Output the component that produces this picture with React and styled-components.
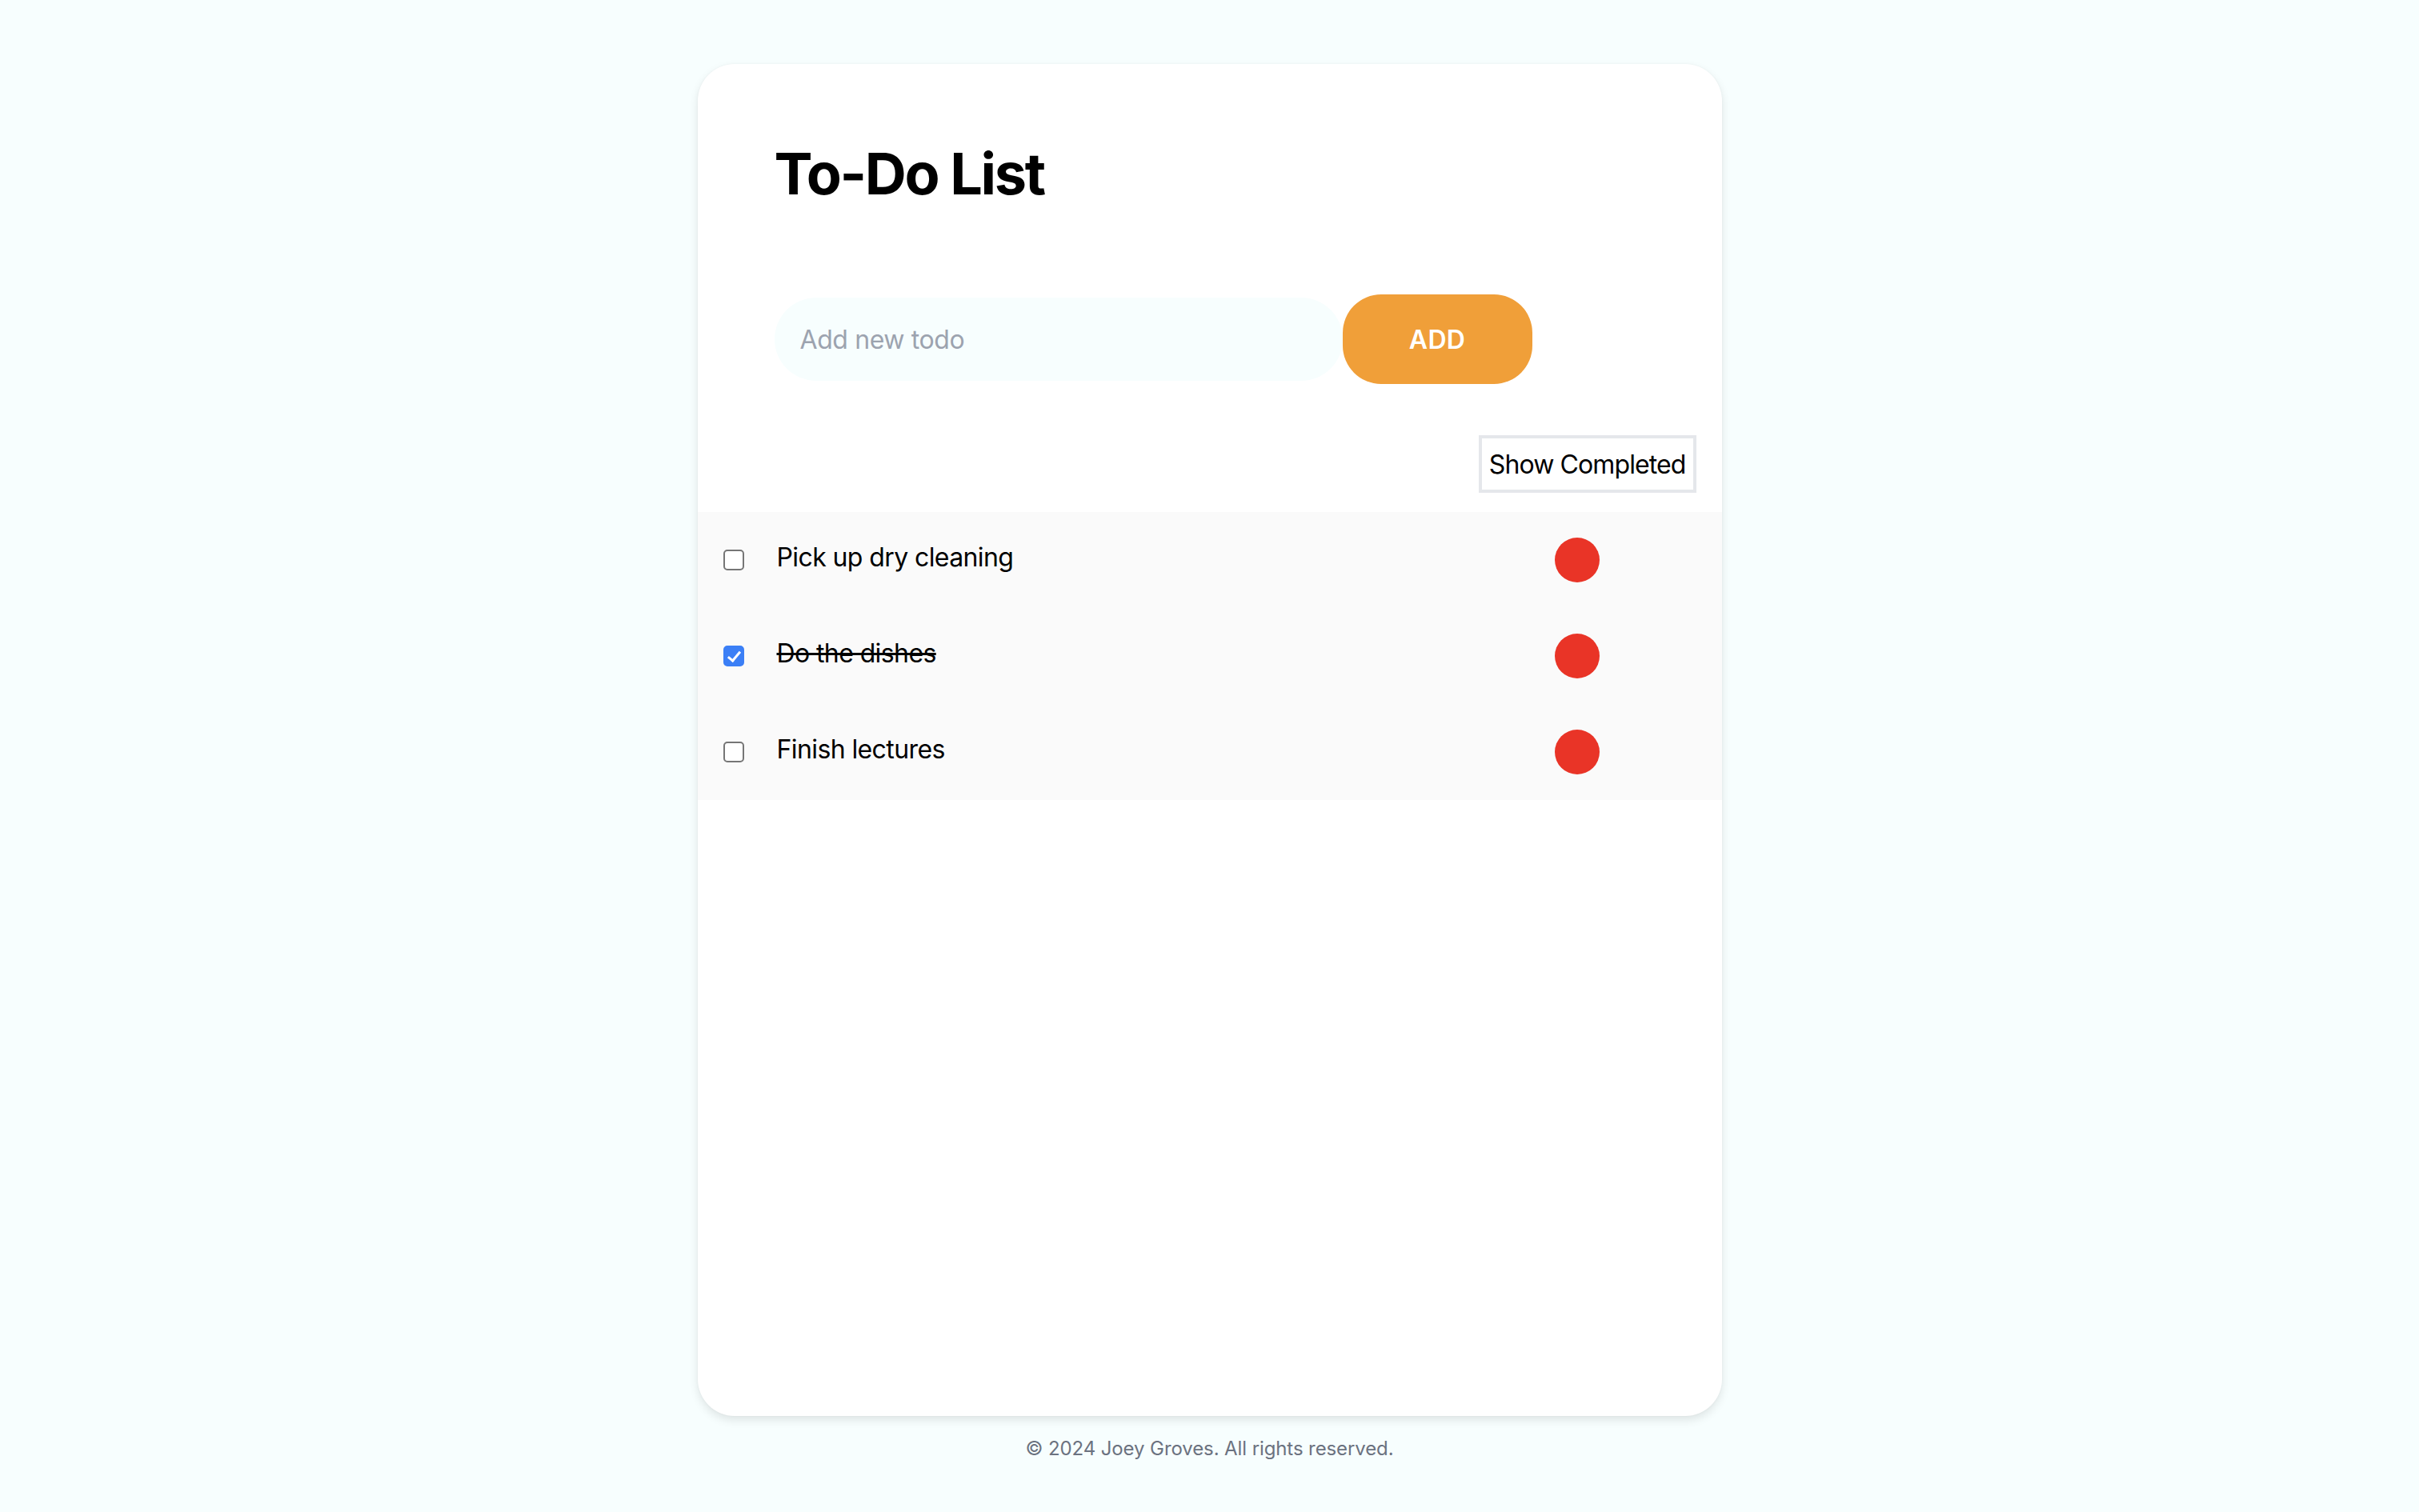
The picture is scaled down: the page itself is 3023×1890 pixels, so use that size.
import React, { useState } from "react";
import styled, { createGlobalStyle } from "styled-components";

const GlobalStyle = createGlobalStyle`
  html, body {
    margin: 0;
    padding: 0;
    background: #f7fefe;
  }
  body {
    font-family: Inter, "Noto Sans", "Liberation Sans", sans-serif;
    color: #000;
  }
  * { box-sizing: border-box; }
`;

const Page = styled.div`
  min-height: 1890px;
  padding-top: 80px;
  display: flex;
  flex-direction: column;
  align-items: center;
`;

const Card = styled.main`
  width: 1280px;
  height: 1690px;
  background: #ffffff;
  border-radius: 46px;
  overflow: hidden;
  box-shadow: 0 5px 12px rgba(0, 0, 0, 0.1), 0 0 3px rgba(0, 0, 0, 0.04);
  display: flex;
  flex-direction: column;
`;

const Header = styled.header`
  padding: 94px 96px 0 96px;
`;

const Title = styled.h1`
  margin: 0;
  font-size: 72px;
  line-height: 86px;
  font-weight: 700;
  letter-spacing: -2.3px;
`;

const InputRow = styled.form`
  margin-top: 108px;
  display: flex;
  align-items: center;
`;

const TodoInput = styled.input`
  width: 710px;
  height: 104px;
  border: none;
  outline: none;
  border-radius: 52px;
  background: #f7fefe;
  padding: 0 32px;
  font-family: inherit;
  font-size: 32px;
  color: #111;
  letter-spacing: -0.4px;
  &::placeholder {
    color: #9ca3af;
  }
`;

const AddButton = styled.button`
  width: 237px;
  height: 112px;
  border: none;
  border-radius: 48px;
  background: #f09f39;
  color: #ffffff;
  font-family: inherit;
  font-size: 32px;
  font-weight: 600;
  letter-spacing: 0.3px;
  cursor: pointer;
`;

const Toolbar = styled.div`
  display: flex;
  justify-content: flex-end;
  padding: 64px 32px 24px 0;
`;

const ToggleButton = styled.button`
  height: 72px;
  padding: 0 9px;
  border: 4px solid #e5e7eb;
  background: #ffffff;
  color: #000;
  font-family: inherit;
  font-size: 32px;
  letter-spacing: -0.9px;
  cursor: pointer;
`;

const List = styled.ul`
  margin: 0;
  padding: 0;
  list-style: none;
  background: #fafafa;
`;

const Row = styled.li`
  height: 120px;
  display: flex;
  align-items: center;
  padding: 0 153px 0 32px;
`;

const Check = styled.input.attrs({ type: "checkbox" })`
  appearance: none;
  margin: 0;
  width: 26px;
  height: 26px;
  border-radius: 5px;
  border: 2px solid #767676;
  background: #fff;
  position: relative;
  cursor: pointer;
  flex: none;
  &:checked {
    background: #3b7ff6;
    border-color: #3b7ff6;
  }
  &:checked::after {
    content: "";
    position: absolute;
    left: 7px;
    top: 2px;
    width: 6px;
    height: 13px;
    border: solid #fff;
    border-width: 0 3.5px 3.5px 0;
    transform: rotate(40deg);
  }
`;

const TodoText = styled.span`
  flex: 1;
  margin-left: 41px;
  padding-bottom: 7px;
  font-size: 32px;
  letter-spacing: -0.6px;
  text-decoration: ${(p) => (p.$done ? "line-through" : "none")};
  text-decoration-thickness: 3px;
`;

const DeleteDot = styled.button`
  width: 56px;
  height: 56px;
  border-radius: 50%;
  border: none;
  padding: 0;
  background: #e93427;
  cursor: pointer;
  flex: none;
`;

const Footer = styled.footer`
  margin-top: 23px;
  font-size: 24px;
  line-height: 36px;
  color: #6b7280;
  letter-spacing: -0.1px;
`;

export default function App() {
  const [todos, setTodos] = useState([
    { id: 1, text: "Pick up dry cleaning", done: false },
    { id: 2, text: "Do the dishes", done: true },
    { id: 3, text: "Finish lectures", done: false },
  ]);

  const toggle = (id) =>
    setTodos((t) => t.map((x) => (x.id === id ? { ...x, done: !x.done } : x)));

  return (
    <>
      <GlobalStyle />
      <Page>
        <Card>
          <Header>
            <Title>To-Do List</Title>
            <InputRow onSubmit={(e) => e.preventDefault()}>
              <TodoInput placeholder="Add new todo" />
              <AddButton type="submit">ADD</AddButton>
            </InputRow>
          </Header>
          <Toolbar>
            <ToggleButton>Show Completed</ToggleButton>
          </Toolbar>
          <List>
            {todos.map((t) => (
              <Row key={t.id}>
                <Check checked={t.done} onChange={() => toggle(t.id)} />
                <TodoText $done={t.done}>{t.text}</TodoText>
                <DeleteDot aria-label="Delete" />
              </Row>
            ))}
          </List>
        </Card>
        <Footer>© 2024 Joey Groves. All rights reserved.</Footer>
      </Page>
    </>
  );
}
